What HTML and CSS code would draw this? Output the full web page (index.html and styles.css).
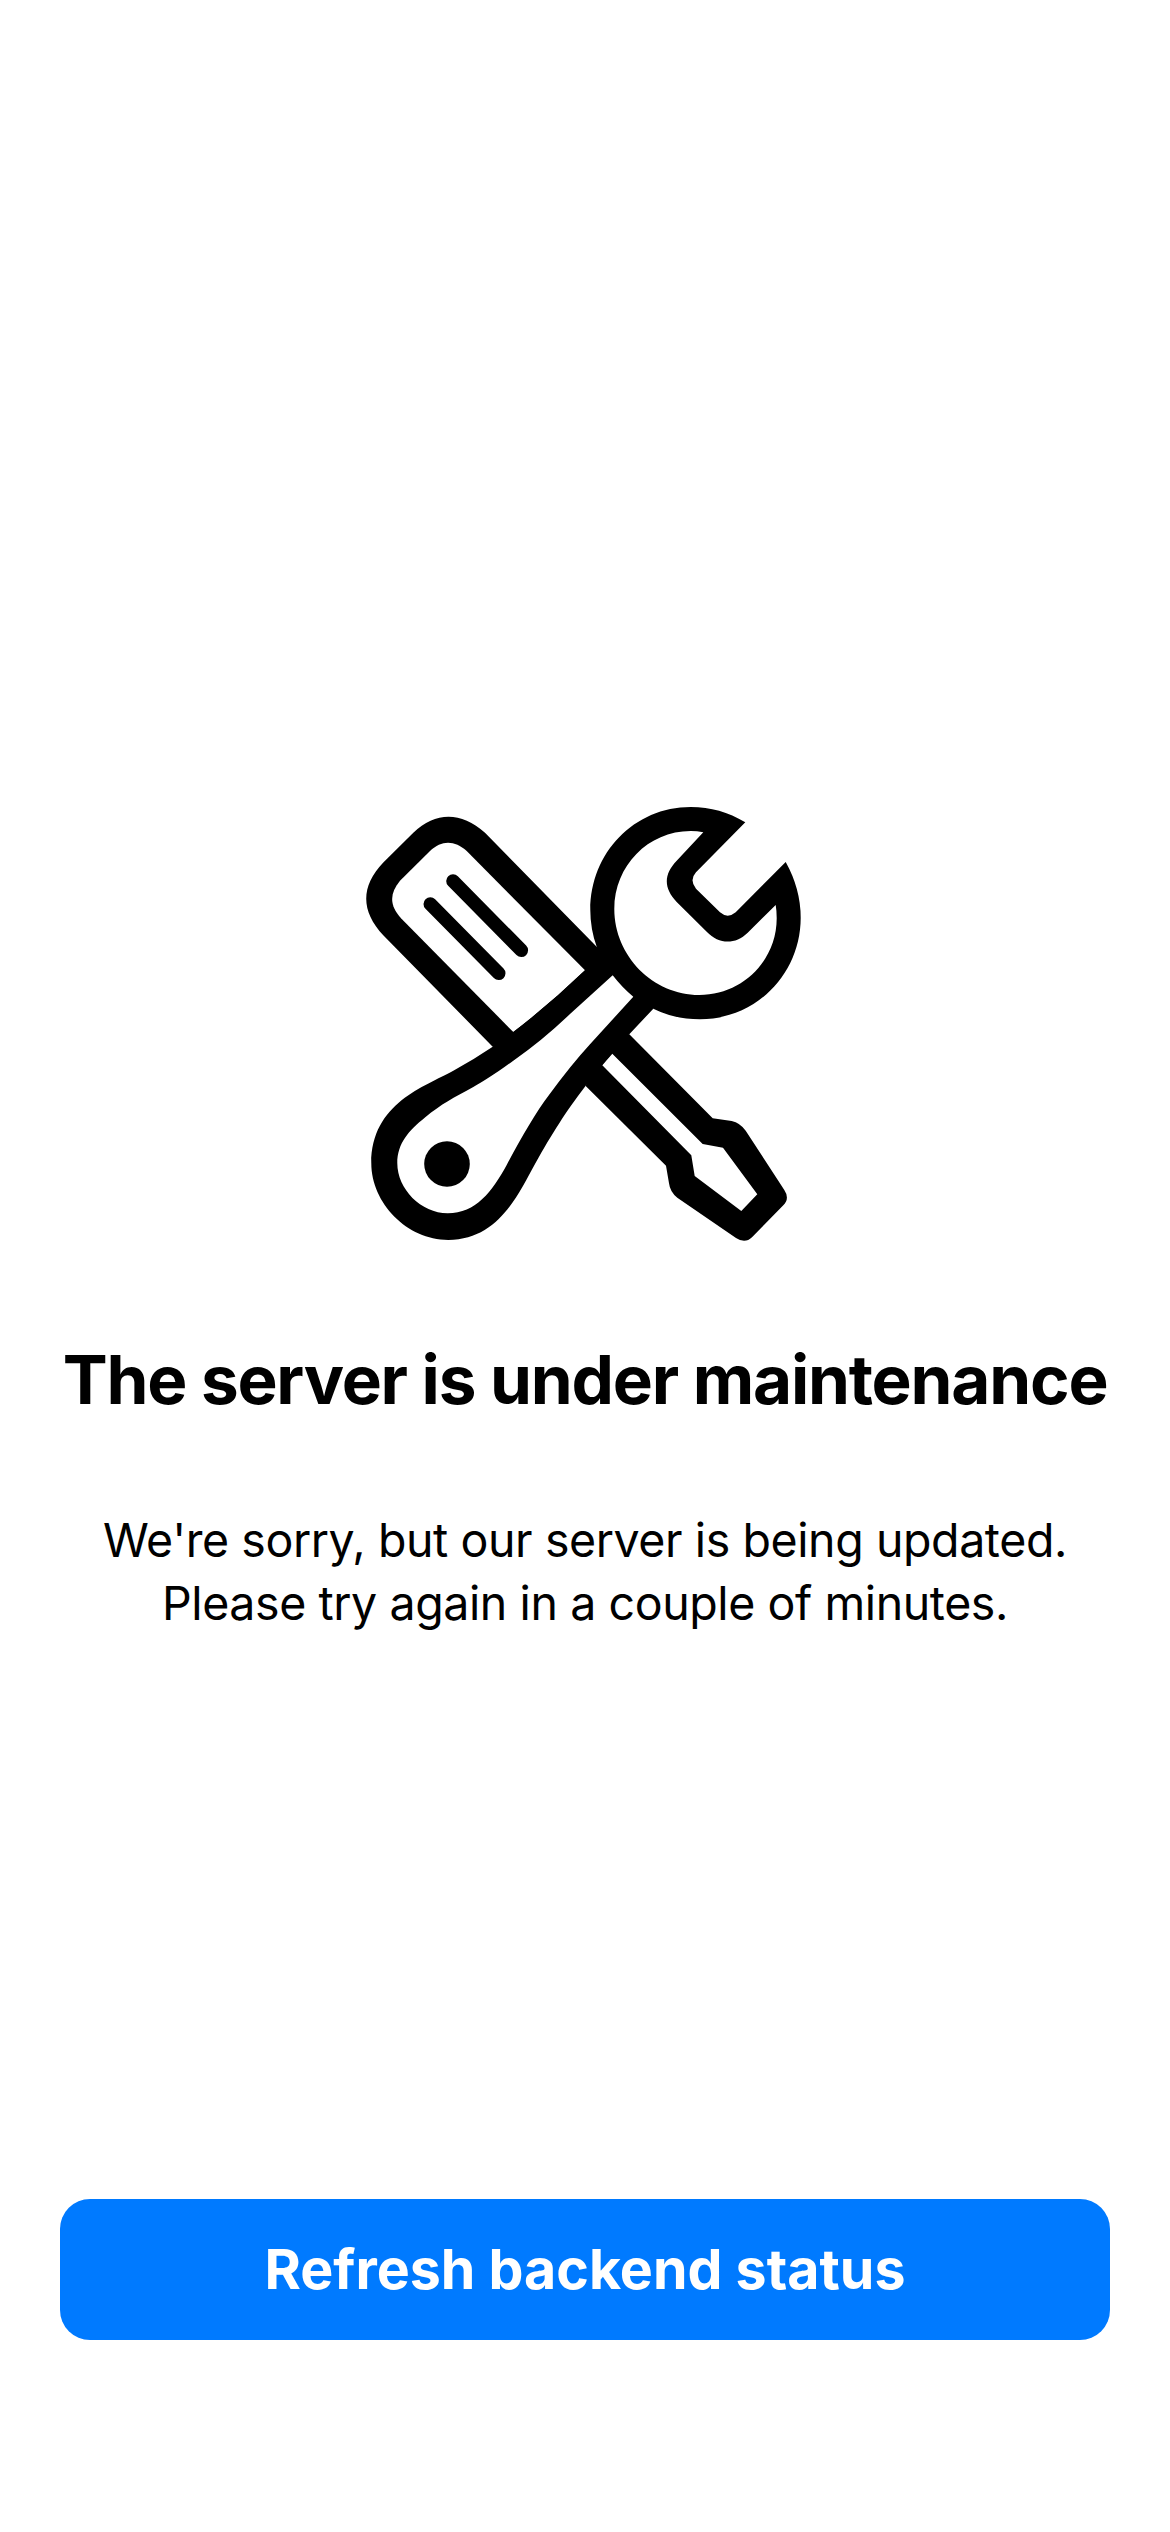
FILE: index.html
```html
<!DOCTYPE html>
<html lang="en">
<head>
<meta charset="utf-8">
<title>Maintenance</title>
<link rel="stylesheet" href="styles.css">
</head>
<body>
<main class="screen">
  <svg class="tools" viewBox="360 800 450 450" aria-hidden="true">
    <!-- screwdriver handle -->
    <path d="M492.7 1046.7L383.5 935.5C360.500 911 360.500 886.500 383.3 862.5L413.300 832.700C435.500 811.500 461 811.300 485 832.700L596.700 946.700L640 980L560 1060Z"/>
    <path class="hole" d="M513.300 1032L401 918.300C389.400 905.500 389.400 893.500 400 880.700L430 851C441.500 840 454.500 840 466.700 851L585 970.300Q550 1004 513.300 1032Z"/>
    <path class="slot" d="M453 881L521.300 950.300M430.300 904L498.700 973.300"/>
    <!-- screwdriver shaft and tip -->
    <path d="M585.700 1086L600 1040L629.300 1034.300L712.700 1118.300L731.700 1121Q740 1122.800 745.700 1130.700L784.300 1190Q790 1198.500 783.300 1205.300L752 1237.300Q745 1244 736 1238L677.300 1197.700Q670 1192 669 1183.300L666 1165.700Z"/>
    <path class="hole" d="M612.300 1053.700L702.700 1144L723 1147.700L757.300 1194.300L741.300 1211L694.700 1176L691.300 1155.300L602.300 1065.300Z"/>
    <!-- wrench handle -->
    <path d="M653.300 1008.700L629.300 1034.300Q605 1060 585.500 1086C565 1113 553 1132 535 1164C518 1195 498 1240 448.300 1240C407 1240 371.300 1203 371.300 1163.300C371.300 1103 425 1086.500 453.300 1070.700Q473 1060 492.700 1046.700L513.300 1032Q550 1004 585 970.300L610 950Z"/>
    <path class="hole" d="M612.700 975.300L570 1014Q543 1040 513.300 1060.700C495 1074 484 1081 473.300 1087C453 1098 442 1103.500 425 1117.500C409 1130.500 397.300 1143 397.300 1163.300C397.300 1189 421 1213.300 447.700 1213.300C476 1213.300 492 1191.500 506.700 1165C521 1138 536 1112 549 1095Q571 1065 590 1044.300L633.300 996.700L640 970Z"/>
    <circle cx="447" cy="1164" r="22.800"/>
    <!-- wrench head -->
    <path d="M745.300 822.300C728 812 711 807 690.700 807C634 807 590.300 853 590.300 910Q590.300 929 596.700 946.700Q602 962.500 612.700 975.300Q622.500 988 633.300 996.700Q642 1003.500 653.300 1008.700Q675 1019.300 700 1019.300C756 1019.300 800.700 974 800.700 917.700Q800.700 889 785.700 862L735.700 912.300Q727.700 919 720 912.300L696 888.700Q689 880 696 872.300Z"/>
    <path class="hole" d="M703.300 832.300Q697 831 690.700 831C648 831 614.300 866 614.300 909C614.300 956 653 995 699.300 995C742 995 776.700 961 776.700 918.300Q776.700 911 775.700 905L747.700 932.700C735 945 719 944.500 706.700 931.700L676.700 902C663.500 888 663.500 874.500 676.700 860.700Z"/>
  </svg>
  <h1 class="title">The server is under maintenance</h1>
  <p class="message">We're sorry, but our server is being updated.<br>Please try again in a couple of minutes.</p>
  <button class="refresh" type="button">Refresh backend status</button>
</main>
</body>
</html>
```

FILE: styles.css
```css
body {
  margin: 0;
  background: #fff;
  color: #000;
  font-family: Inter, "Liberation Sans", sans-serif;
}

.screen {
  box-sizing: border-box;
  height: 2532px;
  padding: 800px 60px 192px;
  display: flex;
  flex-direction: column;
  align-items: center;
}

.tools {
  display: block;
  width: 450px;
  height: 450px;
  flex: none;
}

.hole {
  fill: #fff;
}

.slot {
  fill: none;
  stroke: #000;
  stroke-width: 13.6;
  stroke-linecap: round;
}

.title {
  margin: 87px 0 0;
  font-size: 67.4px;
  line-height: 86px;
  font-weight: 700;
  letter-spacing: -1.2px;
  white-space: nowrap;
}

.message {
  margin: 86px 0 0;
  font-size: 46.5px;
  line-height: 63px;
  letter-spacing: -0.41px;
  text-align: center;
  white-space: nowrap;
}

.refresh {
  margin: auto 0 0;
  padding: 0 0 1px;
  width: 100%;
  height: 141px;
  border: 0;
  border-radius: 30px;
  background: #007aff;
  color: #fff;
  font: 700 55.5px/68px Inter, "Liberation Sans", sans-serif;
  letter-spacing: 0;
  white-space: nowrap;
}
```
